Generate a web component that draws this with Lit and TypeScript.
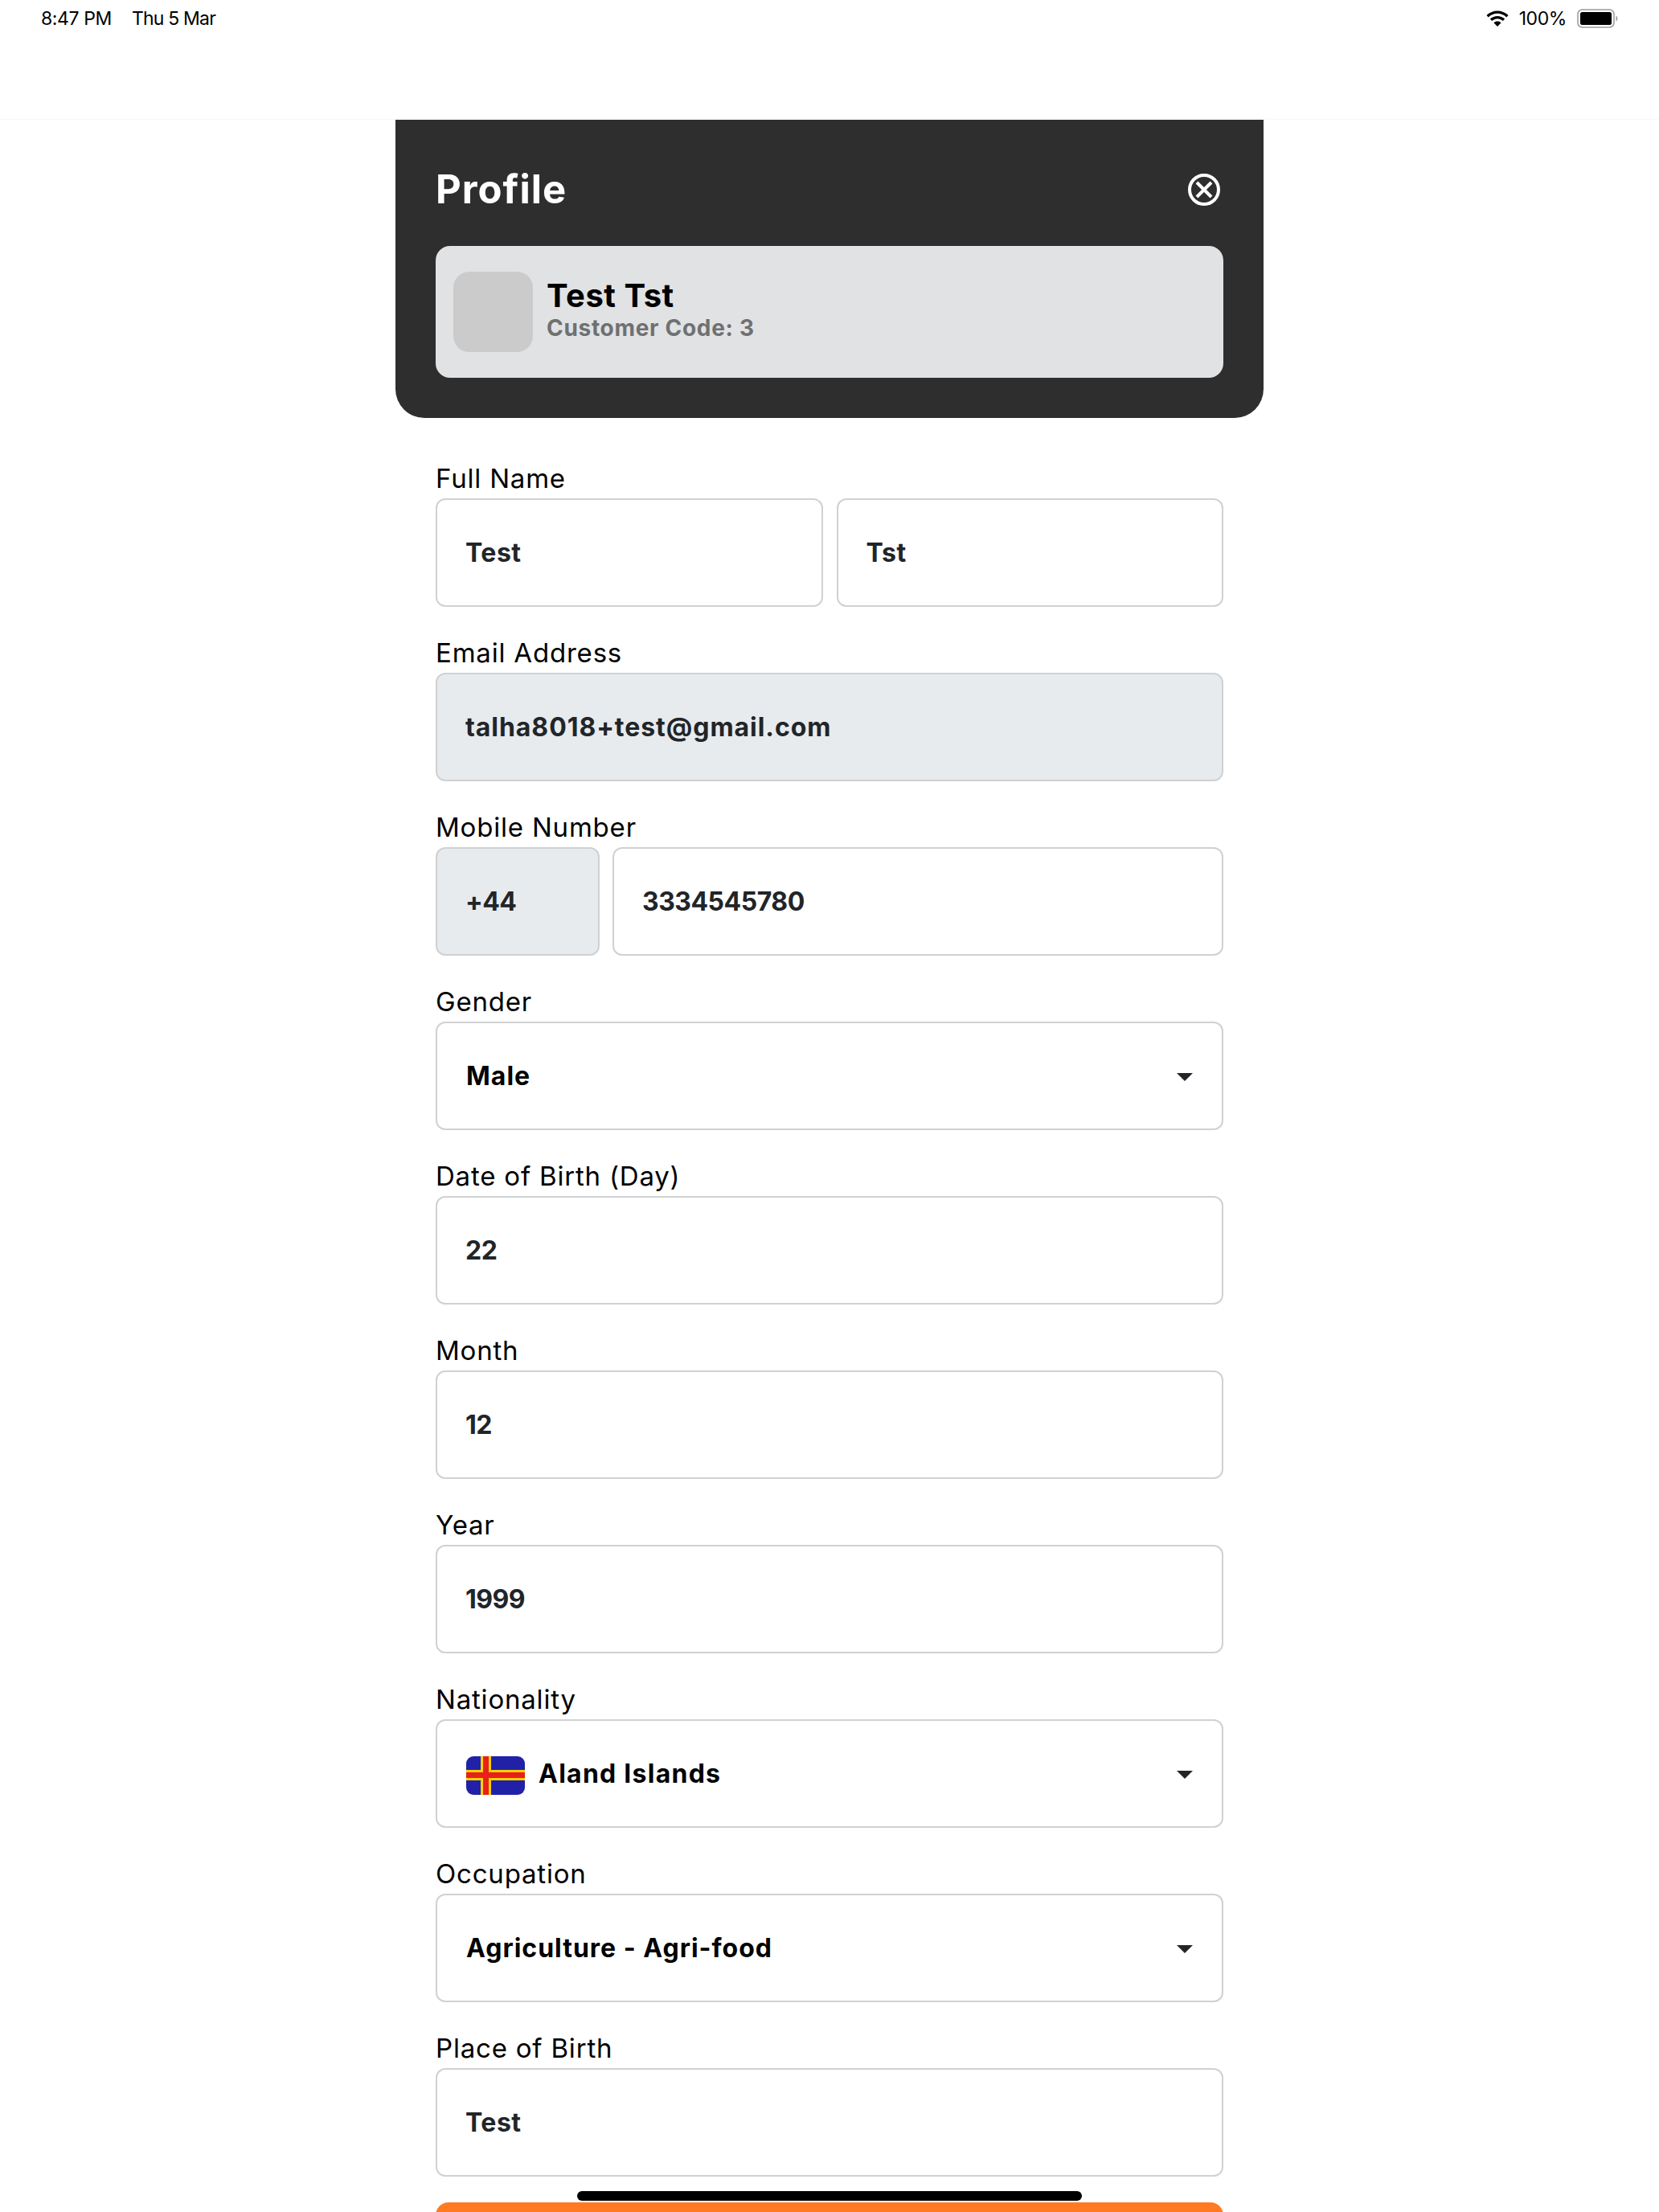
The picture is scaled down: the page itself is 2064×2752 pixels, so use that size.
import { LitElement, html, css, nothing } from "lit";
import { customElement } from "lit/decorators.js";

type Part = { value: string; disabled?: boolean; cls?: string };
type Field = { label: string; parts: Part[]; rowCls?: string; select?: boolean; flag?: boolean };

const FIELDS: Field[] = [
  { label: "Full Name", rowCls: "two", parts: [{ value: "Test" }, { value: "Tst" }] },
  { label: "Email Address", parts: [{ value: "talha8018+test@gmail.com", disabled: true, cls: "wide" }] },
  { label: "Mobile Number", rowCls: "phone", parts: [{ value: "+44", disabled: true, cls: "code digits" }, { value: "3334545780", cls: "digits" }] },
  { label: "Gender", select: true, parts: [{ value: "Male" }] },
  { label: "Date of Birth (Day)", parts: [{ value: "22", cls: "digits" }] },
  { label: "Month", parts: [{ value: "12", cls: "digits" }] },
  { label: "Year", parts: [{ value: "1999", cls: "digits" }] },
  { label: "Nationality", select: true, flag: true, parts: [{ value: "Aland Islands", cls: "wider" }] },
  { label: "Occupation", select: true, parts: [{ value: "Agriculture - Agri-food" }] },
  { label: "Place of Birth", parts: [{ value: "Test" }] },
];

@customElement("app-root")
export class AppRoot extends LitElement {
  static styles = css`
    :host {
      display: block;
      position: relative;
      width: 2064px;
      height: 2752px;
      overflow: hidden;
      background: #fff;
      font-family: Inter, "Liberation Sans", sans-serif;
      color: #000;
    }
    .status {
      height: 149px;
      box-sizing: border-box;
      padding: 10px 50px 0 51px;
      border-bottom: 1px solid #f8f8f8;
      display: flex;
      align-items: flex-start;
      justify-content: space-between;
      font-size: 23px;
      line-height: 26px;
      letter-spacing: -0.4px;
    }
    .status-left { display: flex; gap: 25px; }
    .date { letter-spacing: -0.8px; }
    .status-right { display: flex; align-items: center; }
    .wifi { width: 28px; height: 20px; margin-right: 13px; }
    .battery { width: 52px; height: 24px; margin-left: 13px; }
    .panel {
      width: 1080px;
      margin: 0 auto;
      box-sizing: border-box;
      background: #2e2e2e;
      border-radius: 0 0 36px 36px;
      padding: 0 50px 50px;
    }
    .title-row {
      height: 157px;
      box-sizing: border-box;
      padding-top: 16px;
      display: flex;
      align-items: center;
      justify-content: space-between;
    }
    h1 {
      margin: 0;
      color: #fff;
      font-size: 49px;
      font-weight: 700;
      letter-spacing: 1px;
    }
    .close { width: 40px; height: 40px; margin-right: 4px; display: block; }
    .card {
      height: 164px;
      box-sizing: border-box;
      background: #e1e2e4;
      border-radius: 18px;
      padding: 0 22px;
      display: flex;
      align-items: center;
      gap: 17px;
    }
    .avatar {
      width: 99px;
      height: 100px;
      border-radius: 20px;
      background: #cbcbcb;
    }
    .who { margin-top: -6px; }
    .name { font-size: 40px; font-weight: 700; line-height: 46px; letter-spacing: 0.5px; }
    .code-line { font-size: 28px; font-weight: 700; line-height: 33px; margin-top: 1px; color: #6f7072; letter-spacing: 0.7px; }
    form {
      width: 980px;
      margin: 0 auto;
      padding-top: 58px;
      display: flex;
      flex-direction: column;
      gap: 40px;
    }
    label {
      display: block;
      font-size: 33px;
      line-height: 35px;
      margin-bottom: 7px;
      letter-spacing: 0.8px;
    }
    .row { display: flex; gap: 17px; }
    .row.phone { gap: 16px; }
    .phone .box.code { flex: none; width: 204px; }
    .box {
      flex: 1;
      height: 135px;
      box-sizing: border-box;
      border: 2px solid #d0d1d2;
      border-radius: 12px;
      padding: 0 35px;
      display: flex;
      align-items: center;
      font-size: 32px;
      font-weight: 700;
      color: #212529;
      background: #fff;
      letter-spacing: 0.5px;
    }
    .box.disabled { background: #e8ebee; }
    .box.select { color: #000; padding: 0 36px; letter-spacing: 1px; }
    .box.wide { letter-spacing: 0.95px; }
    .box.digits { letter-spacing: -0.5px; }
    .box.wider { letter-spacing: 1.25px; }
    .flag { width: 73px; height: 48px; margin: 4px 17px 0 0; display: block; }
    .arrow { width: 20px; height: 10px; margin: 2px 0 0 auto; display: block; }
    .submit {
      height: 80px;
      margin-top: -8px;
      background: #ff7a22;
      border-radius: 16px;
    }
    .home {
      position: absolute;
      left: 718px;
      top: 2726px;
      width: 628px;
      height: 12px;
      border-radius: 6px;
      background: #000;
    }
  `;

  private flag() {
    return html`<svg class="flag" viewBox="0 0 73 48" aria-hidden="true">
      <defs><clipPath id="fc"><rect width="73" height="48" rx="9" /></clipPath></defs>
      <g clip-path="url(#fc)">
        <rect width="73" height="48" fill="#2121a8" />
        <rect x="18" width="13" height="48" fill="#ffd000" />
        <rect y="17" width="73" height="13" fill="#ffd000" />
        <rect x="21" width="7" height="48" fill="#e8201c" />
        <rect y="20" width="73" height="7" fill="#e8201c" />
      </g>
    </svg>`;
  }

  private renderField(f: Field) {
    return html`<div>
      <label>${f.label}</label>
      <div class="row ${f.rowCls ?? ""}">
        ${f.parts.map(
          (p) => html`<div class="box ${p.disabled ? "disabled" : ""} ${p.cls ?? ""} ${f.select ? "select" : ""}">
            ${f.flag ? this.flag() : nothing}
            <span>${p.value}</span>
            ${f.select
              ? html`<svg class="arrow" viewBox="0 0 20 10" aria-hidden="true"><path d="M0 0H20L10 10Z" fill="#212529" /></svg>`
              : nothing}
          </div>`
        )}
      </div>
    </div>`;
  }

  render() {
    return html`
      <div class="status">
        <div class="status-left"><span>8:47 PM</span><span class="date">Thu 5 Mar</span></div>
        <div class="status-right">
          <svg class="wifi" viewBox="0 0 28 20" aria-hidden="true">
            <g fill="none" stroke="#000" stroke-width="3.4">
              <path d="M1.6 7.2C9 .4 19 .4 26.4 7.2" />
              <path d="M6 11.8C10.8 7.6 17.2 7.6 22 11.8" />
            </g>
            <path d="M9.4 15.2C12 13 16 13 18.6 15.2L14 20Z" fill="#000" />
          </svg>
          <span>100%</span>
          <svg class="battery" viewBox="0 0 52 24" aria-hidden="true">
            <rect x="1" y="1" width="45" height="22" rx="5.5" fill="none" stroke="#9a9a9a" stroke-width="1.5" />
            <rect x="4" y="4" width="39" height="16" rx="2.5" fill="#000" />
            <path d="M48.500 8.500C51 9.500 51 14.500 48.500 15.500Z" fill="#9a9a9a" />
          </svg>
        </div>
      </div>
      <section class="panel">
        <div class="title-row">
          <h1>Profile</h1>
          <svg class="close" viewBox="0 0 40 40" aria-hidden="true">
            <circle cx="20" cy="20" r="18" fill="none" stroke="#fff" stroke-width="4" />
            <path d="M11 11L29 29M29 11L11 29" stroke="#fff" stroke-width="4" fill="none" />
          </svg>
        </div>
        <div class="card">
          <div class="avatar"></div>
          <div class="who">
            <div class="name">Test Tst</div>
            <div class="code-line">Customer Code: 3</div>
          </div>
        </div>
      </section>
      <form>
        ${FIELDS.map((f) => this.renderField(f))}
        <div class="submit"></div>
      </form>
      <div class="home"></div>
    `;
  }
}
